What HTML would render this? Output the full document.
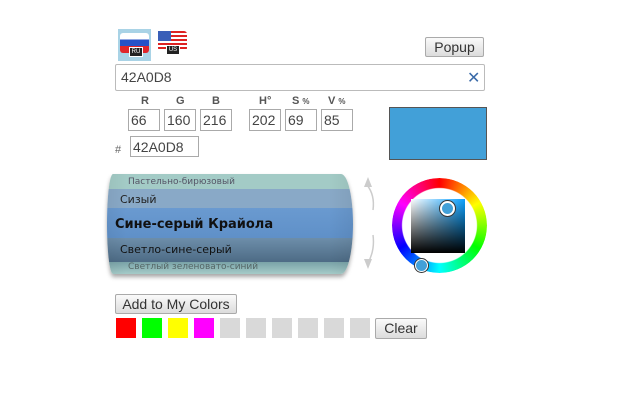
<!DOCTYPE html><html><head><meta charset="utf-8"><style>
body{margin:0;width:640px;height:400px;background:#fff;font-family:"Liberation Sans","DejaVu Sans",sans-serif;position:relative;overflow:hidden}
.a{position:absolute}
.in{position:absolute;border:1px solid #aaa;background:#fff;font-size:14px;color:#444;box-sizing:border-box;padding:2px 2px;line-height:16px}
.lb{position:absolute;font-size:11px;font-weight:bold;color:#555;top:95px}
.lb small{font-size:8px}
.btn{position:absolute;border:1px solid #aaa;border-radius:2px;background:linear-gradient(#fafafa,#dcdcdc);font-size:14px;color:#333;text-align:center;box-sizing:border-box}
.sw{position:absolute;top:318px;width:20px;height:20px;background:#d9d9d9}
.band{position:absolute;left:0;width:100%;font-family:"DejaVu Sans",sans-serif}
</style></head><body>
<div class="a" style="left:118px;top:29px;width:33px;height:32px;background:#a9d3e6"></div>
<div class="a" style="left:120px;top:33px;width:29px;height:20px;border-radius:3px;background:linear-gradient(#fff 0 33%,#2552c8 33% 66%,#e0262b 66%)"></div>
<div class="a" style="left:129px;top:47px;width:12px;height:8px;background:#222;color:#fff;font-size:6px;line-height:8px;text-align:center;border:1px solid #fff">RU</div>
<div class="a" style="left:158px;top:31px;width:29px;height:20px;border-radius:3px;background:repeating-linear-gradient(#d22 0 2px,#fff 2px 4px)"></div>
<div class="a" style="left:158px;top:31px;width:13px;height:10px;background:#3a5fb8"></div>
<div class="a" style="left:166px;top:45px;width:12px;height:8px;background:#222;color:#fff;font-size:6px;line-height:8px;text-align:center;border:1px solid #fff">US</div>
<div class="btn" style="left:425px;top:37px;width:59px;height:20px;line-height:18px">Popup</div>
<div class="in" style="left:115px;top:64px;width:370px;height:27px;padding:4px 5px;border-color:#bbb;border-radius:2px">42A0D8</div>
<div class="a" style="left:467px;top:68px;font-size:16px;font-weight:bold;color:#3a6aa8">✕</div>
<div class="lb" style="left:141px">R</div><div class="lb" style="left:176px">G</div><div class="lb" style="left:212px">B</div>
<div class="lb" style="left:259px">H°</div><div class="lb" style="left:292px">S <small>%</small></div><div class="lb" style="left:328px">V <small>%</small></div>
<div class="in" style="left:128px;top:109px;width:32px;height:22px">66</div>
<div class="in" style="left:164px;top:109px;width:32px;height:22px">160</div>
<div class="in" style="left:200px;top:109px;width:32px;height:22px">216</div>
<div class="in" style="left:249px;top:109px;width:32px;height:22px">202</div>
<div class="in" style="left:285px;top:109px;width:32px;height:22px">69</div>
<div class="in" style="left:321px;top:109px;width:32px;height:22px">85</div>
<div class="a" style="left:115px;top:144px;font-size:11px;color:#666">#</div>
<div class="in" style="left:130px;top:136px;width:69px;height:21px">42A0D8</div>
<div class="a" style="left:389px;top:107px;width:96px;height:51px;background:#42A0D8;border:1px solid #555"></div>
<div class="a" style="left:107px;top:174px;width:246px;height:100px;border-radius:6px 12px 12px 6px/50px;overflow:hidden;box-shadow:0 3px 4px rgba(0,0,0,.35)">
<div class="band" style="top:0;height:15px;background:#a3cbc6;font-size:9px;color:#556;padding-left:21px;line-height:16px;box-sizing:border-box">Пастельно-бирюзовый</div>
<div class="band" style="top:15px;height:19px;background:#89a9c7;font-size:11px;color:#222;padding-left:13px;line-height:21px;box-sizing:border-box">Сизый</div>
<div class="band" style="top:34px;height:30px;background:linear-gradient(#6a9ad0,#5f90c8);font-size:13px;font-weight:bold;color:#111;padding-left:8px;line-height:34px;box-sizing:border-box">Сине-серый Крайола</div>
<div class="band" style="top:64px;height:24px;background:linear-gradient(#6d8eaa,#4d6b85);font-size:11px;color:#111;padding-left:13px;line-height:24px;box-sizing:border-box">Светло-сине-серый</div>
<div class="band" style="top:88px;height:12px;background:linear-gradient(#7aa3a8,#a5cbc8);font-size:9px;color:#566;padding-left:21px;line-height:10px;box-sizing:border-box">Светлый зеленовато-синий</div>
<div class="a" style="left:0;top:0;width:100%;height:100%;background:linear-gradient(90deg,rgba(0,0,0,.05),rgba(255,255,255,0) 8%,rgba(255,255,255,0) 90%,rgba(0,0,0,.06))"></div>
</div>
<svg class="a" style="left:362px;top:175px" width="20" height="98"><path d="M5 10 Q13 20 11 35" stroke="#ccc" fill="none" stroke-width="1.5"/><path d="M2 12 L6 2 L10 12Z" fill="#ccc"/><path d="M11 60 Q13 75 6 88" stroke="#ccc" fill="none" stroke-width="1.5"/><path d="M2 84 L6 94 L10 84Z" fill="#ccc"/></svg>
<div class="a" style="left:392px;top:178px;width:95px;height:95px;border-radius:50%;background:conic-gradient(red,#ff0,#0f0,#0ff,#00f,#f0f,red);-webkit-mask:radial-gradient(circle,transparent 37px,#000 38px);mask:radial-gradient(circle,transparent 37px,#000 38px)"></div>
<div class="a" style="left:411px;top:199px;width:54px;height:54px;background:linear-gradient(transparent,#000),linear-gradient(90deg,#fff,#0aa0ff)"></div>
<div class="a" style="left:440px;top:201px;width:11px;height:11px;border-radius:50%;background:#42A0D8;border:2px solid #fff;box-shadow:0 0 0 1px #333"></div>
<div class="a" style="left:415px;top:259px;width:11px;height:11px;border-radius:50%;background:#42A0D8;border:1px solid #fff;box-shadow:0 0 0 1px #333"></div>
<div class="btn" style="left:115px;top:294px;width:122px;height:20px;line-height:18px">Add to My Colors</div>
<div class="sw" style="left:116px;background:#f00"></div><div class="sw" style="left:142px;background:#0f0"></div><div class="sw" style="left:168px;background:#ff0"></div><div class="sw" style="left:194px;background:#f0f"></div>
<div class="sw" style="left:220px"></div><div class="sw" style="left:246px"></div><div class="sw" style="left:272px"></div><div class="sw" style="left:298px"></div><div class="sw" style="left:324px"></div><div class="sw" style="left:350px"></div>
<div class="btn" style="left:375px;top:318px;width:52px;height:21px;line-height:19px">Clear</div>
</body></html>
